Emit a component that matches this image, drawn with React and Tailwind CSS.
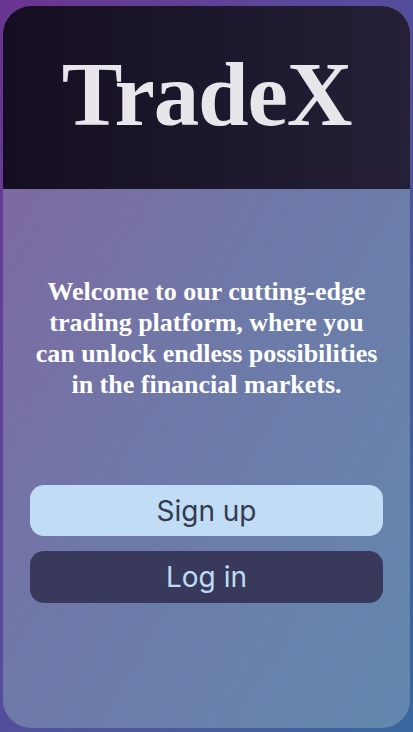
export default function App() {
  return (
    <div className="h-[732px] w-full overflow-hidden bg-gradient-to-br from-[#6a3491] via-[#534e9c] to-[#3868a0] pt-[6px] pb-[4px] px-[3px]">
      <div className="h-full rounded-[28px] overflow-hidden bg-gradient-to-br from-[#8164a0] via-[#6e79a8] to-[#6288ae] flex flex-col">
        {/* Header */}
        <div className="h-[183px] bg-gradient-to-r from-[#150e22] to-[#252037] flex items-center justify-center">
          <h1 className="font-['Liberation_Serif',serif] font-bold text-[91px] leading-none text-[#e8e6ea] tracking-[-1.2px] pb-[6px]">
            TradeX
          </h1>
        </div>

        {/* Body */}
        <div className="flex-1 flex flex-col items-center px-[27px]">
          <p className="mt-[87px] w-[350px] font-['Liberation_Serif',serif] font-bold text-[26px] leading-[31px] text-white text-center">
            Welcome to our cutting-edge trading platform, where you can unlock endless possibilities in the financial markets.
          </p>

          <div className="mt-[85px] w-full flex flex-col gap-[15px]">
            <button className="h-[51px] w-full rounded-[14px] bg-[#c0ddf5] text-[#353a4f] font-['Inter',sans-serif] text-[28px] leading-none">
              Sign up
            </button>
            <button className="h-[52px] w-full rounded-[14px] bg-[#393a5b] text-[#bfdcf4] font-['Inter',sans-serif] text-[28px] leading-none">
              Log in
            </button>
          </div>
        </div>
      </div>
    </div>
  );
}
